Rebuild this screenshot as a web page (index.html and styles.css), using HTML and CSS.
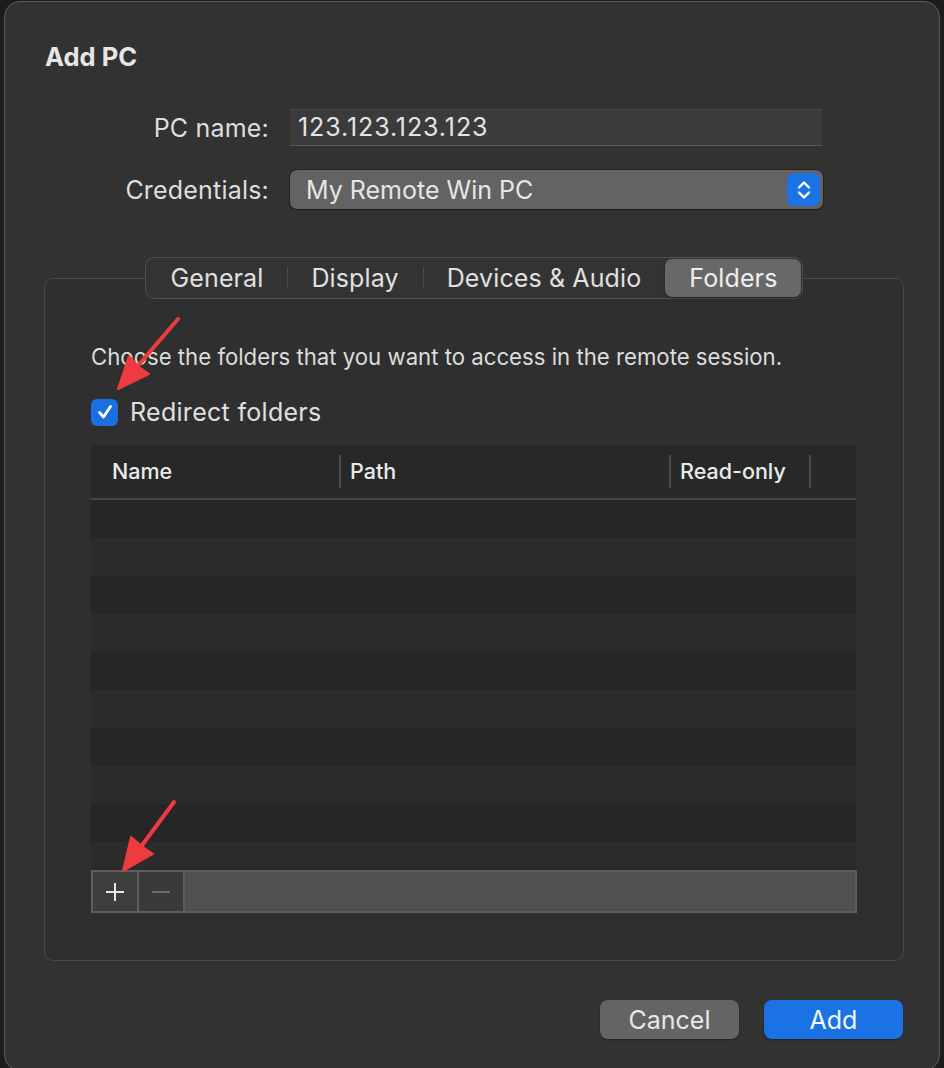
FILE: index.html
```html
<!DOCTYPE html>
<html lang="en">
<head>
    <meta charset="UTF-8">
    <meta name="viewport" content="width=device-width, initial-scale=1.0">
    <title>Add PC</title>
    <link rel="stylesheet" href="styles.css">
</head>
<body>
    <div class="window">
        <h1 class="title">Add PC</h1>

        <div class="form">
            <div class="form-row">
                <label class="form-label">PC name:</label>
                <div class="text-field">123.123.123.123</div>
            </div>
            <div class="form-row">
                <label class="form-label">Credentials:</label>
                <div class="popup">
                    <span>My Remote Win PC</span>
                    <span class="stepper">
                        <svg width="20" height="24" viewBox="0 0 20 24">
                            <path d="M5 9.5 L10 4.5 L15 9.5" fill="none" stroke="#fff" stroke-width="2.4" stroke-linecap="round" stroke-linejoin="round"/>
                            <path d="M5 14.5 L10 19.5 L15 14.5" fill="none" stroke="#fff" stroke-width="2.4" stroke-linecap="round" stroke-linejoin="round"/>
                        </svg>
                    </span>
                </div>
            </div>
        </div>

        <div class="tabs">
            <div class="segmented">
                <div class="segment">General</div>
                <div class="segment">Display</div>
                <div class="segment">Devices &amp; Audio</div>
                <div class="segment active">Folders</div>
            </div>
        </div>

        <div class="tab-box">
            <p class="hint">Choose the folders that you want to access in the remote session.</p>

            <div class="check-row">
                <span class="checkbox">
                    <svg width="20" height="20" viewBox="0 0 20 20">
                        <path d="M4.5 10.5 L8.5 15 L15.5 4.5" fill="none" stroke="#fff" stroke-width="2.8" stroke-linecap="round" stroke-linejoin="round"/>
                    </svg>
                </span>
                <span>Redirect folders</span>
            </div>

            <div class="table">
                <div class="table-head">
                    <div class="col col-name">Name</div>
                    <div class="col col-path">Path</div>
                    <div class="col col-ro">Read-only</div>
                    <div class="col col-rest"></div>
                </div>
                <div class="table-body">
                    <div class="row"></div>
                    <div class="row"></div>
                    <div class="row"></div>
                    <div class="row"></div>
                    <div class="row"></div>
                    <div class="row"></div>
                    <div class="row"></div>
                    <div class="row"></div>
                    <div class="row"></div>
                    <div class="row"></div>
                </div>
                <div class="table-bar">
                    <div class="bar-btn">
                        <svg width="22" height="22" viewBox="0 0 22 22">
                            <path d="M11 2 V20 M2 11 H20" stroke="#e8e8e8" stroke-width="2"/>
                        </svg>
                    </div>
                    <div class="bar-btn disabled">
                        <svg width="22" height="22" viewBox="0 0 22 22">
                            <path d="M2 11 H20" stroke="#6a6a6a" stroke-width="2"/>
                        </svg>
                    </div>
                    <div class="bar-fill"></div>
                </div>
            </div>
        </div>

        <div class="actions">
            <button class="btn">Cancel</button>
            <button class="btn btn-primary">Add</button>
        </div>
    </div>

    <!-- red callout arrows -->
    <svg class="callouts" width="944" height="1068" viewBox="0 0 944 1068">
        <g fill="#ee3b3f" stroke="#ee3b3f" stroke-linecap="round" stroke-linejoin="round">
            <line x1="178" y1="319" x2="136" y2="368" stroke-width="4"/>
            <polygon points="118,389 149,374 139,367 129,356" stroke-width="2"/>
            <line x1="174" y1="802" x2="140" y2="848" stroke-width="4"/>
            <polygon points="123,871 153,854 143,847 131,837" stroke-width="2"/>
        </g>
    </svg>
</body>
</html>
```

FILE: styles.css
```css
body {
    margin: 0;
    background: #1c1c1c;
    font-family: Inter, "Open Sans", sans-serif;
    color: #dedede;
    overflow: hidden;
}
.window {
    position: relative;
    margin: 1px 4px 0 4px;
    height: 1070px;
    box-sizing: border-box;
    background: #323232;
    border: 1px solid #5a5a5a;
    border-radius: 16px;
    padding: 0 35px 0 39px;
}
.title {
    margin: 0;
    padding: 41px 0 0 1px;
    font-size: 25.5px;
    line-height: 28px;
    font-weight: 700;
    color: #e6e6e6;
}
.form {
    margin-top: 38px;
    display: flex;
    flex-direction: column;
    gap: 24px;
}
.form-row {
    display: flex;
    align-items: center;
    gap: 21px;
}
.form-label {
    width: 225px;
    text-align: right;
    font-size: 25px;
    letter-spacing: 0.2px;
    line-height: 30px;
}
.text-field {
    width: 532px;
    height: 37px;
    box-sizing: border-box;
    padding: 0 10px 0 8px;
    background: #3b3b3b;
    border-top: 1px solid #444;
    border-bottom: 1px solid #5c5c5c;
    font-size: 25px;
    letter-spacing: 0.9px;
    line-height: 35px;
    color: #e4e4e4;
}
.popup {
    width: 533px;
    height: 39px;
    box-sizing: border-box;
    display: flex;
    align-items: center;
    justify-content: space-between;
    padding: 0 3px 0 16px;
    background: #636363;
    border-radius: 7px;
    box-shadow: 0 0 0 1px rgba(0, 0, 0, 0.25), 0 1px 2px rgba(0, 0, 0, 0.35);
    font-size: 25px;
    color: #e6e6e6;
}
.stepper {
    width: 33px;
    height: 33px;
    border-radius: 7px;
    background: #1b73e6;
    display: flex;
    align-items: center;
    justify-content: center;
}
.tabs {
    margin-top: 48px;
    display: flex;
    justify-content: center;
    position: relative;
    z-index: 1;
}
.segmented {
    display: flex;
    align-items: center;
    height: 42px;
    box-sizing: border-box;
    padding: 0 1px;
    background: #333;
    border: 1px solid #4f4f4f;
    border-radius: 9px;
}
.segment {
    position: relative;
    padding: 0 24px;
    height: 38px;
    line-height: 38px;
    font-size: 25px;
    letter-spacing: 0.12px;
    color: #e0e0e0;
}
.segment + .segment::before {
    content: "";
    position: absolute;
    left: 0;
    top: 8px;
    bottom: 8px;
    width: 1px;
    background: #4a4a4a;
}
.segment.active {
    background: #686868;
    border-radius: 7px;
    box-shadow: 0 1px 2px rgba(0, 0, 0, 0.4);
    color: #eee;
}
.segment.active::before {
    display: none;
}
.tab-box {
    margin-top: -21px;
    height: 683px;
    box-sizing: border-box;
    padding: 65px 47px 0 46px;
    background: #2f2f2f;
    border: 1px solid #484848;
    border-radius: 9px;
}
.hint {
    margin: 0;
    font-size: 22.2px;
    line-height: 26px;
    color: #dcdcdc;
}
.check-row {
    margin-top: 27px;
    display: flex;
    align-items: center;
    gap: 12px;
    font-size: 25px;
    letter-spacing: 0.3px;
    line-height: 30px;
    color: #e0e0e0;
}
.checkbox {
    width: 27px;
    height: 27px;
    border-radius: 6px;
    background: #1a6fe2;
    display: flex;
    align-items: center;
    justify-content: center;
}
.table {
    margin-top: 18px;
}
.table-head {
    display: flex;
    height: 53px;
    background: #272929;
    border-bottom: 2px solid #444746;
}
.col {
    position: relative;
    font-size: 21.5px;
    font-weight: 500;
    line-height: 53px;
    color: #eaeaea;
    box-sizing: border-box;
}
.col-name { width: 248px; padding-left: 21px; }
.col-path { width: 330px; padding-left: 11px; }
.col-ro { width: 140px; padding-left: 11px; }
.col-rest { flex: 1; }
.col-path::before,
.col-ro::before,
.col-rest::before {
    content: "";
    position: absolute;
    left: 0;
    top: 10px;
    bottom: 10px;
    width: 2px;
    background: #4a4c4b;
}
.table-body {
    height: 370px;
    overflow: hidden;
    background: #2b2b2b;
}
.row {
    height: 38px;
}
.row:nth-child(odd) {
    background: #262626;
}
.table-bar {
    display: flex;
    height: 43px;
    width: 766px;
    box-sizing: border-box;
    border: 2px solid #5d5d5d;
    background: #505050;
}
.bar-btn {
    width: 44px;
    display: flex;
    align-items: center;
    justify-content: center;
    background: #3d3d3d;
    border-right: 2px solid #5d5d5d;
}
.bar-btn.disabled {
    background: #3a3a3a;
}
.bar-fill {
    flex: 1;
}
.actions {
    margin-top: 39px;
    display: flex;
    justify-content: flex-end;
    gap: 25px;
    padding-right: 1px;
}
.btn {
    width: 139px;
    height: 39px;
    border: none;
    border-radius: 8px;
    background: #646464;
    color: #e8e8e8;
    font-family: Inter, "Open Sans", sans-serif;
    font-size: 25px;
    box-shadow: 0 1px 2px rgba(0, 0, 0, 0.35);
}
.btn-primary {
    background: #1a72e4;
    color: #f4f8ff;
}
.callouts {
    position: absolute;
    left: 0;
    top: 0;
    pointer-events: none;
}
```
